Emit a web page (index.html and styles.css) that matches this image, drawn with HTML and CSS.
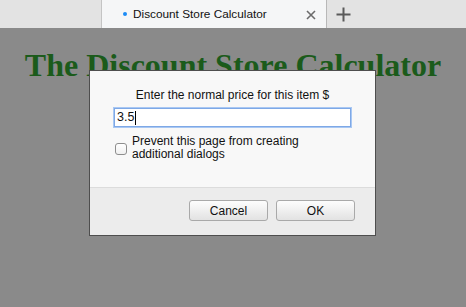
FILE: index.html
```html
<!DOCTYPE html>
<html>
<head>
<meta charset="utf-8">
<link rel="stylesheet" href="styles.css">
</head>
<body>
<div class="window">
  <div class="tabbar">
    <div class="tab">
      <span class="dot"></span>
      <span class="tab-title">Discount Store Calculator</span>
      <svg class="tab-close" width="10" height="10" viewBox="0 0 10 10"><path d="M1 1 L9 9 M9 1 L1 9" stroke="#6b6b6b" stroke-width="1.6" fill="none"/></svg>
    </div>
    <div class="newtab">
      <svg width="15" height="15" viewBox="0 0 15 15"><path d="M7.5 0.5 V14.5 M0.5 7.5 H14.5" stroke="#5a5a5a" stroke-width="2" fill="none"/></svg>
    </div>
  </div>
  <main class="page">
    <h1 class="title">The Discount Store Calculator</h1>
    <div class="dialog">
      <div class="dialog-body">
        <div class="prompt">Enter the normal price for this item $</div>
        <div class="field">3.5<span class="caret"></span></div>
        <label class="check-row">
          <span class="checkbox"></span>
          <span class="check-label">Prevent this page from creating<br>additional dialogs</span>
        </label>
      </div>
      <div class="dialog-footer">
        <button class="btn">Cancel</button>
        <button class="btn">OK</button>
      </div>
    </div>
  </main>
</div>
</body>
</html>
```

FILE: styles.css
```css
html, body {
  margin: 0;
  padding: 0;
}
body {
  width: 466px;
  height: 307px;
  overflow: hidden;
  font-family: "Liberation Sans", Arial, sans-serif;
}
.window {
  display: flex;
  flex-direction: column;
  height: 307px;
}
.tabbar {
  height: 28px;
  flex: none;
  background: #e3e3e3;
  display: flex;
  align-items: stretch;
}
.tab {
  margin-left: 101px;
  width: 226px;
  box-sizing: border-box;
  background: #f5f6f7;
  border-left: 1px solid #c4c4c4;
  border-right: 1px solid #b8b8b8;
  display: flex;
  align-items: center;
  padding-left: 21px;
}
.dot {
  width: 4px;
  height: 4px;
  border-radius: 50%;
  background: #1c8bf5;
  flex: none;
  margin-top: -1px;
}
.tab-title {
  margin-left: 6px;
  font-size: 11.8px;
  color: #111;
  flex: 1;
  white-space: nowrap;
}
.tab-close {
  margin-right: 10px;
  margin-top: 1px;
  flex: none;
}
.newtab {
  margin-left: 9px;
  display: flex;
  align-items: center;
}
.page {
  flex: 1;
  position: relative;
  background: #8a8a8a;
  text-align: center;
}
.title {
  margin: 19px 0 0;
  font-family: "Liberation Serif", "Times New Roman", serif;
  font-size: 32px;
  line-height: 36px;
  font-weight: bold;
  color: #1b5b1b;
}
.dialog {
  position: absolute;
  left: 89px;
  top: 42px;
  width: 287px;
  height: 166px;
  box-sizing: border-box;
  border: 1px solid #4e4e4e;
  background: #f8f8f8;
  display: flex;
  flex-direction: column;
  text-align: left;
  font-size: 12px;
  color: #111;
}
.dialog-body {
  flex: 1;
  padding: 17px 24px 0;
}
.prompt {
  text-align: center;
  line-height: 15px;
}
.field {
  margin-top: 5px;
  height: 19px;
  box-sizing: border-box;
  border: 1px solid #7ea8e6;
  box-shadow: 0 0 0 1px #a9c8f3;
  background: #fff;
  line-height: 17px;
  padding-left: 2px;
  font-size: 12.5px;
  display: flex;
  align-items: center;
}
.caret {
  display: inline-block;
  width: 1px;
  height: 14px;
  background: #000;
  margin-left: 1px;
}
.check-row {
  margin-top: 8px;
  display: flex;
  align-items: center;
}
.checkbox {
  width: 12px;
  height: 12px;
  box-sizing: border-box;
  border: 1px solid #8e8e8e;
  border-radius: 3px;
  background: linear-gradient(#ffffff, #f0f0f0);
  margin-left: 1px;
  margin-top: 2px;
  flex: none;
}
.check-label {
  margin-left: 5px;
  line-height: 13px;
}
.dialog-footer {
  height: 48px;
  box-sizing: border-box;
  border-top: 1px solid #dcdcdc;
  background: #ececec;
  display: flex;
  justify-content: flex-end;
  align-items: flex-start;
  gap: 8px;
  padding: 12px 20px 0 0;
}
.btn {
  width: 79px;
  height: 21px;
  box-sizing: border-box;
  border: 1px solid #a9a9a9;
  border-radius: 3px;
  background: linear-gradient(#fdfdfd, #e2e2e2);
  font-family: "Liberation Sans", Arial, sans-serif;
  font-size: 12px;
  color: #111;
  padding: 0;
  margin: 0;
}
```
